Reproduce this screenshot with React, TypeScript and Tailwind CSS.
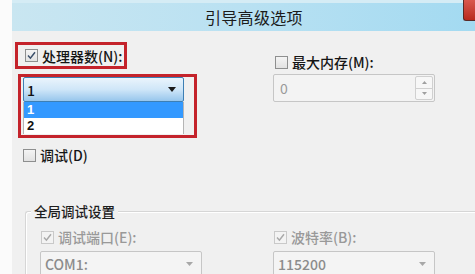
import React from 'react';

const font = { fontFamily: '"Noto Sans CJK SC", "Microsoft YaHei", sans-serif' };

const Check = ({ checked = false, disabled = false }: { checked?: boolean; disabled?: boolean }) => (
  <span
    className={`flex items-center justify-center w-[13px] h-[13px] shrink-0 border ${
      disabled ? 'border-[#c9c9c9] bg-[#f3f3f3]' : 'border-[#8e8f8f] bg-gradient-to-b from-[#f4f4f4] to-[#e2e2e2]'
    }`}
  >
    {checked && (
      <svg width="9" height="9" viewBox="0 0 9 9">
        <path
          d="M1 4.6 L3.4 7.2 L8 1.2"
          fill="none"
          stroke={disabled ? '#a9a9a9' : '#3b4f6a'}
          strokeWidth="1.5"
        />
      </svg>
    )}
  </span>
);

const Label = ({
  text,
  checked,
  disabled,
}: {
  text: string;
  checked?: boolean;
  disabled?: boolean;
}) => (
  <div className="flex items-center gap-[4px] h-[16px]">
    <Check checked={checked} disabled={disabled} />
    <span className={`text-[14px] leading-none font-medium ${disabled ? 'text-[#999999]' : 'text-[#151515]'}`}>{text}</span>
  </div>
);

const DisabledCombo = ({ value }: { value: string }) => (
  <div className="flex items-center justify-between w-[162px] h-[26px] border border-[#c6c6c6] rounded-[2px] bg-[#f4f4f4] pl-[4px] pr-[8px]">
    <span className="text-[14px] leading-none font-medium text-[#8c8c8c]">{value}</span>
    <svg width="7" height="4" viewBox="0 0 7 4">
      <path d="M0 0 H7 L3.5 4 Z" fill="#a8a8a8" />
    </svg>
  </div>
);

export default function App() {
  return (
    <div style={font} className="w-[475px] h-[274px] overflow-hidden flex bg-[#fafafa]">
      {/* outer edge */}
      <div className="w-[12px] shrink-0 bg-[#fbfbfb]" />

      <div className="flex-1 flex flex-col bg-[#f0f0f0]">
        {/* Title bar */}
        <div className="h-[31px] shrink-0 flex items-start bg-gradient-to-r from-[#c9e6f1] via-[#b9e1f2] to-[#a3daf1]">
          <div className="flex-1 h-full flex items-center pl-[193px] border-t-[3px] border-[#d5ecf5]">
            <span className="text-[16px] leading-none text-[#1b1b1b] tracking-[0.3px]">引导高级选项</span>
          </div>
          <div className="w-[12px] h-[21px] bg-gradient-to-b from-[#d9584d] to-[#b8281d] border-l border-b border-[#5a2a26] rounded-bl-[3px]" />
        </div>

        {/* Top section */}
        <div className="flex">
          {/* Left column */}
          <div className="w-[261px] shrink-0 flex flex-col items-start">
            <div className="ml-[3px] mt-[11px] w-[112px] h-[27px] border-[3px] border-[#c4232b] flex items-center pl-[7px]">
              <Label text="处理器数(N):" checked />
            </div>

            <div className="ml-[6px] mt-[5px] w-[179px] border-[3px] border-[#c4232b] flex flex-col pl-[2px] pb-[1px]">
              <div className="w-[161px] h-[25px] flex items-center justify-between pl-[3px] pr-[7px] border border-[#3d7fb4] rounded-[2px] bg-gradient-to-b from-[#eaf4fc] via-[#cfe6f8] to-[#97c6ec]">
                <span className="text-[14px] leading-none font-medium text-[#111]">1</span>
                <svg width="8" height="5" viewBox="0 0 8 5">
                  <path d="M0 0 H8 L4 5 Z" fill="#1a1a1a" />
                </svg>
              </div>
              <div className="w-[161px] flex flex-col bg-white border-l border-r border-[#b5b5b5] font-['Liberation_Sans',sans-serif]">
                <div className="h-[16px] pl-[3px] bg-[#3399ff] text-white text-[13px] leading-[16px] font-bold">1</div>
                <div className="h-[16px] pl-[3px] text-[#111] text-[13px] leading-[16px] font-bold">2</div>
              </div>
            </div>

            <div className="ml-[11px] mt-[9px]">
              <Label text="调试(D)" />
            </div>
          </div>

          {/* Right column */}
          <div className="flex flex-col items-start">
            <div className="ml-[2px] mt-[23px]">
              <Label text="最大内存(M):" />
            </div>
            <div className="mt-[4px] w-[162px] h-[28px] flex border border-[#c6c6c6] rounded-[2px] bg-[#f3f3f3]">
              <div className="flex-1 flex items-center pl-[6px] text-[14px] leading-none text-[#9a9a9a]">0</div>
              <div className="w-[18px] my-[1px] mr-[1px] flex flex-col border border-[#d0d0d0] rounded-[2px] bg-[#f7f7f7]">
                <div className="flex-1 flex items-center justify-center border-b border-[#d0d0d0]">
                  <svg width="5" height="3" viewBox="0 0 5 3">
                    <path d="M0 3 L2.5 0 L5 3 Z" fill="#a0a0a0" />
                  </svg>
                </div>
                <div className="flex-1 flex items-center justify-center">
                  <svg width="5" height="3" viewBox="0 0 5 3">
                    <path d="M0 0 H5 L2.5 3 Z" fill="#a0a0a0" />
                  </svg>
                </div>
              </div>
            </div>
          </div>
        </div>

        {/* Global debug settings group */}
        <div className="relative ml-[13px] mt-[48px] flex-1 border-t border-l border-[#d6d6d6] rounded-tl-[3px] shadow-[inset_1px_1px_0_#ffffff]">
          <span className="absolute left-[5px] -top-[10px] px-[3px] bg-[#f0f0f0] text-[13.5px] leading-[18px] font-medium text-[#1e1e1e]">
            全局调试设置
          </span>
          <div className="flex pl-[14px] pt-[17px]">
            <div className="w-[233px] shrink-0 flex flex-col items-start gap-[6px]">
              <div className="ml-[1px]">
                <Label text="调试端口(E):" checked disabled />
              </div>
              <DisabledCombo value="COM1:" />
            </div>
            <div className="flex flex-col items-start gap-[6px]">
              <div className="ml-[1px]">
                <Label text="波特率(B):" checked disabled />
              </div>
              <DisabledCombo value="115200" />
            </div>
          </div>
        </div>
      </div>
    </div>
  );
}
